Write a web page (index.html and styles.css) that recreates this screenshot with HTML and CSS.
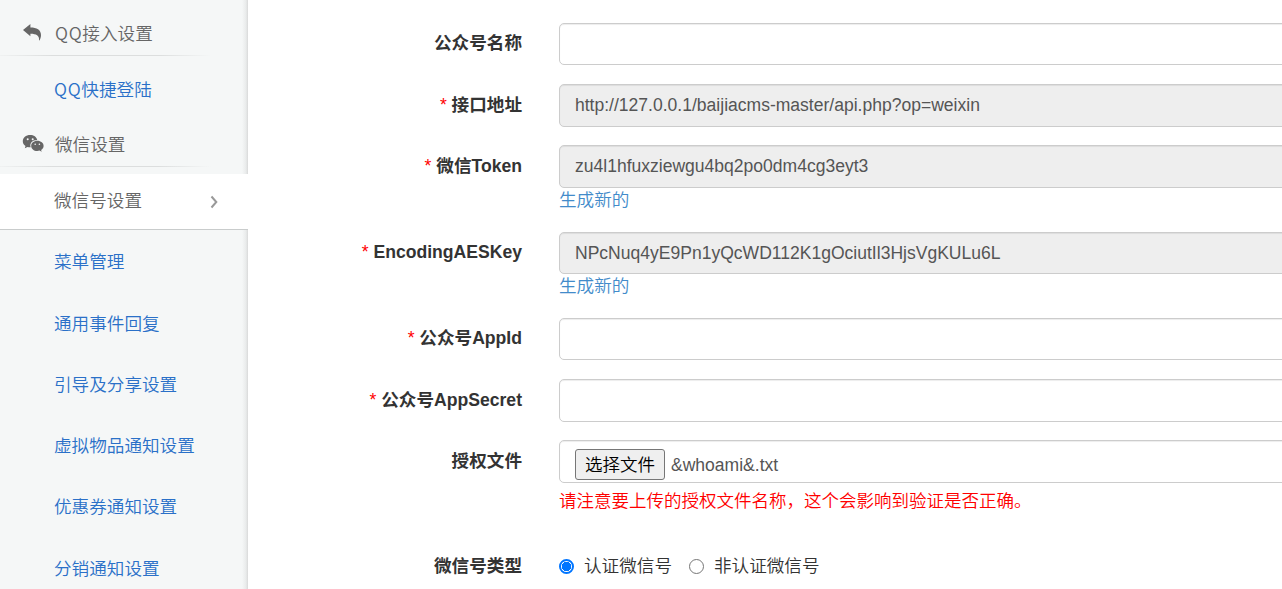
FILE: index.html
```html
<!DOCTYPE html>
<html lang="zh-CN">
<head>
<meta charset="utf-8">
<title>微信号设置</title>
<link rel="stylesheet" href="styles.css">
</head>
<body>
<div class="layout">
  <nav class="sidebar">
    <div class="menu-head">
      <svg class="menu-icon" viewBox="0 0 22 20"><path d="M1 8 8.400 2v3.600c6.300 0 10.600 2.400 10.600 7.400 0 2-.6 3.800-1.300 5.200-.3.400-.7.200-.6-.2.300-4.200-2.600-6.200-8.700-6.200V14.200Z"/></svg>
      <span><span class="latin">QQ</span>接入设置</span>
    </div>
    <div class="menu-group">
      <a class="menu-link"><span class="latin">QQ</span>快捷登陆</a>
    </div>
    <div class="menu-head">
      <svg class="menu-icon" viewBox="0 0 22 20"><path fill-rule="evenodd" d="M8.200 2C3.900 2 .8 4.700.8 8.200c0 2 1 3.700 2.700 4.800L2.800 15.300l2.700-1.400c.9.300 1.700.4 2.700.4l.5-.1c-1.500-4.200 2-7.400 6.500-7.300C14.600 4 11.700 2 8.200 2ZM5.700 5.300a1 1 0 1 1 0 2 1 1 0 0 1 0-2Zm5 0a1 1 0 1 1 0 2 1 1 0 0 1 0-2Z"/><path fill-rule="evenodd" d="M15.300 7.800c-3.600 0-6.100 2.300-6.100 5.100s2.500 5.100 6.100 5.100c.8 0 1.500-.2 2.200-.4l2.200 1.200-.6-1.900c1.500-1 2.500-2.300 2.500-4 0-2.800-2.700-5.100-6.300-5.100Zm-2.100 2.700a.8.800 0 1 1 0 1.600.8.800 0 0 1 0-1.600Zm4.200 0a.8.800 0 1 1 0 1.600.8.800 0 0 1 0-1.600Z"/></svg>
      <span>微信设置</span>
    </div>
    <div class="menu-group">
      <a class="menu-link active"><span>微信号设置</span><svg class="chevron" viewBox="0 0 8 14"><path d="M1.500 1.500 6.300 7 1.500 12.500"/></svg></a>
      <a class="menu-link">菜单管理</a>
      <a class="menu-link">通用事件回复</a>
      <a class="menu-link">引导及分享设置</a>
      <a class="menu-link">虚拟物品通知设置</a>
      <a class="menu-link">优惠券通知设置</a>
      <a class="menu-link">分销通知设置</a>
    </div>
  </nav>
  <form class="settings">
    <div class="row">
      <label class="label">公众号名称</label>
      <div class="field"><div class="control"></div></div>
    </div>
    <div class="row">
      <label class="label"><span class="required">*</span> 接口地址</label>
      <div class="field"><div class="control readonly">http://127.0.0.1/baijiacms-master/api.php?op=weixin</div></div>
    </div>
    <div class="row">
      <label class="label"><span class="required">*</span> 微信Token</label>
      <div class="field"><div class="control readonly">zu4l1hfuxziewgu4bq2po0dm4cg3eyt3</div><a class="generate">生成新的</a></div>
    </div>
    <div class="row">
      <label class="label"><span class="required">*</span> EncodingAESKey</label>
      <div class="field"><div class="control readonly">NPcNuq4yE9Pn1yQcWD112K1gOciutIl3HjsVgKULu6L</div><a class="generate">生成新的</a></div>
    </div>
    <div class="row">
      <label class="label"><span class="required">*</span> 公众号AppId</label>
      <div class="field"><div class="control"></div></div>
    </div>
    <div class="row">
      <label class="label"><span class="required">*</span> 公众号AppSecret</label>
      <div class="field"><div class="control"></div></div>
    </div>
    <div class="row">
      <label class="label">授权文件</label>
      <div class="field">
        <div class="control file"><span class="file-button">选择文件</span><span>&amp;whoami&amp;.txt</span></div>
        <div class="hint">请注意要上传的授权文件名称，这个会影响到验证是否正确。</div>
      </div>
    </div>
    <div class="row">
      <label class="label">微信号类型</label>
      <div class="field choices">
        <span class="choice"><i class="radio checked"></i>认证微信号</span>
        <span class="choice"><i class="radio"></i>非认证微信号</span>
      </div>
    </div>
  </form>
</div>
</body>
</html>
```
FILE: styles.css
```css
* { box-sizing: border-box; }
body {
  margin: 0;
  background: #fff;
  color: #333;
  font: 350 17.6px/25px "Liberation Sans", "Noto Sans CJK SC", sans-serif;
  overflow: hidden;
}
.layout { display: flex; height: 589px; overflow: hidden; }
.sidebar {
  flex: 0 0 248px;
  padding-top: 7px;
  color: #666;
  font-family: "Noto Sans CJK SC", sans-serif;
  background: linear-gradient(to left, #d8d9d9 0, #e9ebeb 2px, #f5f7f7 6px);
}
.menu-head {
  display: flex;
  height: 49px;
  padding: 13px 0 0 22px;
  background: linear-gradient(to right, #f0f2f2, #dcdede 25%, #dcdede 75%, #f5f7f7) left bottom / 211px 1px no-repeat;
}
.menu-icon { width: 22px; height: 20px; margin: 2px 11px 0 0; fill: #666; }
.latin { letter-spacing: .7px; }
.menu-group { padding-top: 7px; }
.menu-link {
  display: flex;
  height: 55px;
  padding: 13px 0 0 54px;
  color: #2a70c8;
}
.menu-link + .menu-link { margin-top: 6.25px; }
.menu-link.active {
  height: 56px;
  margin-bottom: -1px;
  background: #fff;
  border-bottom: 1px solid #c9cccc;
  color: #666;
}
.chevron {
  width: 8px;
  height: 14px;
  margin: 8px 30px 0 auto;
  fill: none;
  stroke: #999;
  stroke-width: 2;
}
.settings { flex: 1; padding-top: 22.75px; min-width: 0; }
.row { display: flex; margin-bottom: 18.75px; }
.label {
  width: 274px;
  margin-right: 37px;
  padding-top: 8.5px;
  text-align: right;
  font-weight: 700;
  flex: none;
}
.required { color: #f00; font-weight: 300; }
.field { flex: 1; min-width: 0; }
.control {
  width: 740px;
  height: 42.5px;
  padding: 8px 15px;
  border: 1px solid #ccc;
  border-radius: 5px;
  box-shadow: inset 0 1px 1px rgba(0, 0, 0, .075);
  color: #555;
  font-size: 17.54px;
  line-height: 24.5px;
}
.readonly { background: #eee; }
.generate { display: block; height: 25px; color: #428bca; }
.file { display: flex; gap: 6px; line-height: 32px; }
.file-button {
  width: 90px;
  height: 31px;
  border: 1px solid #767676;
  border-radius: 3px;
  background: #efefef;
  color: #000;
  text-align: center;
  line-height: 30px;
}
.hint { height: 44px; padding-top: 6px; color: #f00; font-size: 17.5px; }
.choices { display: flex; gap: 17px; padding-top: 8.25px; }
.choice { display: flex; align-items: center; height: 25px; }
.radio {
  width: 15px;
  height: 15px;
  margin: 0 10px 0 0;
  border: 1px solid #767676;
  border-radius: 50%;
}
.checked {
  border: 2px solid #0075ff;
  background: radial-gradient(circle, #0075ff 4.5px, #fff 5px);
}
```
